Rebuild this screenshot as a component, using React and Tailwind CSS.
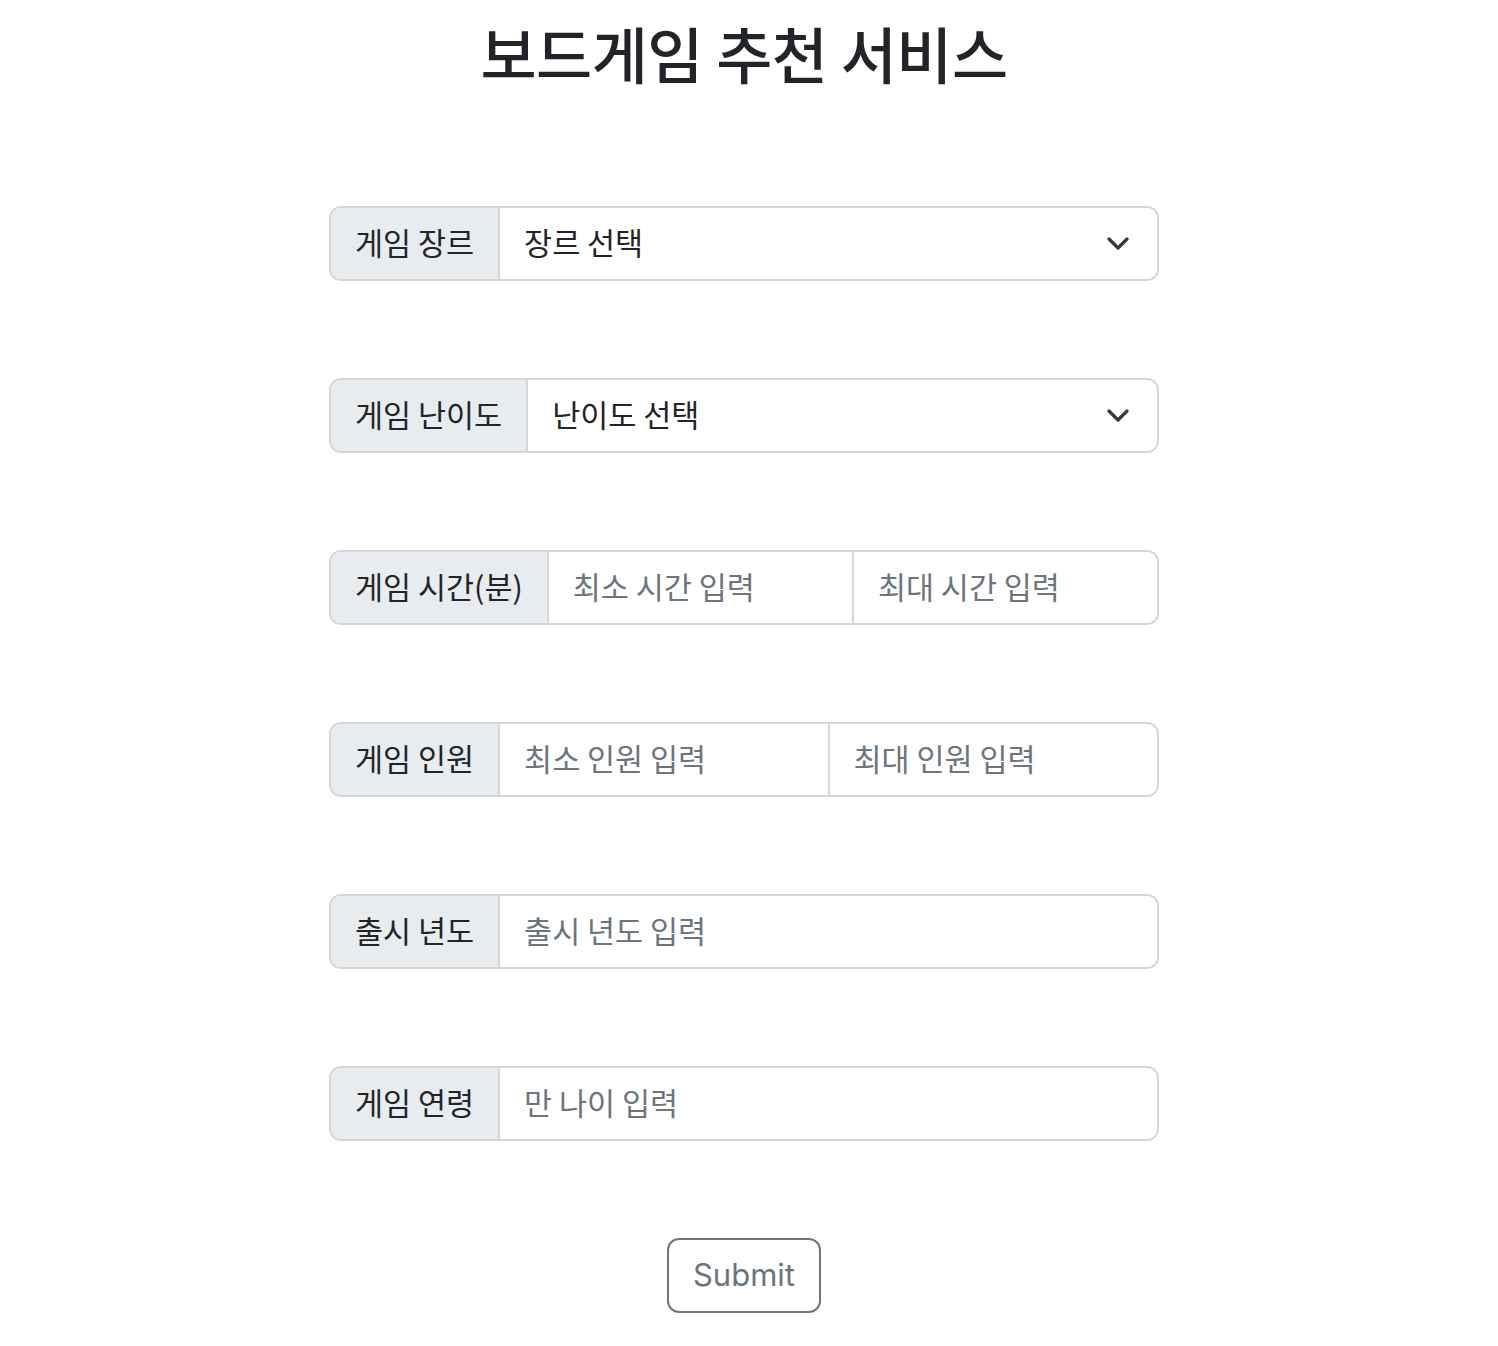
import React from "react";

const font = { fontFamily: '"Noto Sans CJK KR", Inter, sans-serif' };

function Chevron() {
  return (
    <svg className="pointer-events-none absolute right-[28px] top-1/2 -translate-y-1/2" width="22" height="14" viewBox="0 0 22 14" fill="none">
      <path d="M2 2 L11 11 L20 2" stroke="#343a40" strokeWidth="3.2" strokeLinecap="round" strokeLinejoin="round" />
    </svg>
  );
}

function Addon({ children }) {
  return (
    <span className="flex items-center bg-[#e9ecef] px-[24px] pb-[4px] text-[30.5px] leading-[48px] text-[#212529] whitespace-nowrap">
      {children}
    </span>
  );
}

function SelectGroup({ label, placeholder }) {
  return (
    <div className="flex h-[75px] w-full overflow-hidden rounded-[12px] border-2 border-[#d3d7db]">
      <Addon>{label}</Addon>
      <div className="relative flex flex-1 border-l-2 border-[#d3d7db]">
        <select
          defaultValue=""
          className="w-full appearance-none bg-white px-[24px] pb-[4px] text-[30.5px] leading-[48px] text-[#212529] outline-none"
          style={font}
        >
          <option value="">{placeholder}</option>
        </select>
        <Chevron />
      </div>
    </div>
  );
}

function InputGroup({ label, placeholders }) {
  return (
    <div className="flex h-[75px] w-full overflow-hidden rounded-[12px] border-2 border-[#d3d7db]">
      <Addon>{label}</Addon>
      {placeholders.map((p) => (
        <input
          key={p}
          type="text"
          placeholder={p}
          className="min-w-0 flex-1 border-l-2 border-[#d3d7db] bg-white px-[24px] pb-[4px] text-[30.5px] leading-[48px] text-[#212529] outline-none placeholder:text-[#6c757d]"
          style={font}
        />
      ))}
    </div>
  );
}

export default function App() {
  return (
    <div className="min-h-[1346px] w-full bg-white pt-[17px]" style={font}>
      <h1 className="pr-[10px] text-center text-[61px] font-medium leading-[71px] tracking-[-0.5px] text-[#212529]">
        보드게임 추천 서비스
      </h1>
      <div className="ml-[329px] mt-[118px] flex w-[830px] flex-col items-center gap-[97px]">
        <SelectGroup label="게임 장르" placeholder="장르 선택" />
        <SelectGroup label="게임 난이도" placeholder="난이도 선택" />
        <InputGroup label="게임 시간(분)" placeholders={["최소 시간 입력", "최대 시간 입력"]} />
        <InputGroup label="게임 인원" placeholders={["최소 인원 입력", "최대 인원 입력"]} />
        <InputGroup label="출시 년도" placeholders={["출시 년도 입력"]} />
        <InputGroup label="게임 연령" placeholders={["만 나이 입력"]} />
        <button
          type="button"
          className="h-[75px] rounded-[12px] border-2 border-[#6c757d] bg-white px-[24px] pb-[2px] text-[31px] leading-[48px] text-[#6c757d]"
          style={{ fontFamily: 'Inter, "Noto Sans CJK KR", sans-serif' }}
        >
          Submit
        </button>
      </div>
    </div>
  );
}
